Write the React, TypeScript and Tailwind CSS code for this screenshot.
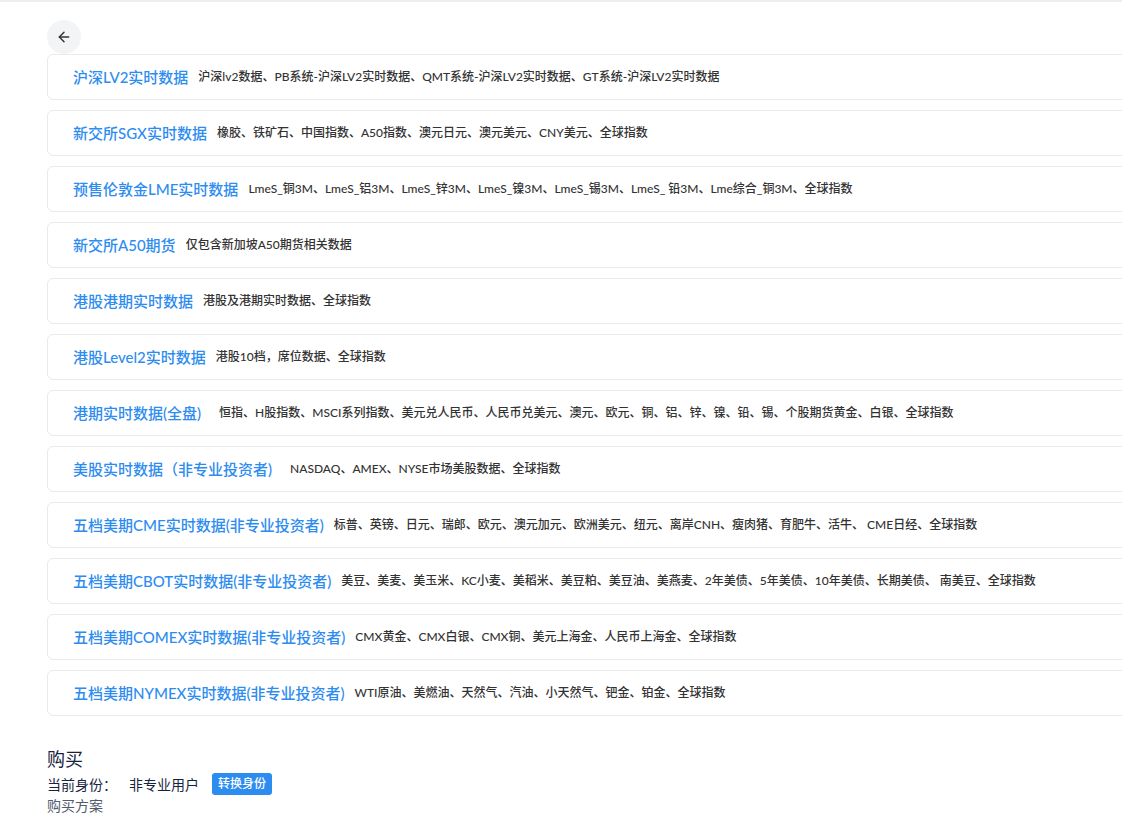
import { ArrowLeft } from "lucide-react";

const products = [
  { name: "沪深LV2实时数据", desc: "沪深lv2数据、PB系统-沪深LV2实时数据、QMT系统-沪深LV2实时数据、GT系统-沪深LV2实时数据" },
  { name: "新交所SGX实时数据", desc: "橡胶、铁矿石、中国指数、A50指数、澳元日元、澳元美元、CNY美元、全球指数" },
  { name: "预售伦敦金LME实时数据", desc: "LmeS_铜3M、LmeS_铝3M、LmeS_锌3M、LmeS_镍3M、LmeS_锡3M、LmeS_ 铅3M、Lme综合_铜3M、全球指数" },
  { name: "新交所A50期货", desc: "仅包含新加坡A50期货相关数据" },
  { name: "港股港期实时数据", desc: "港股及港期实时数据、全球指数" },
  { name: "港股Level2实时数据", desc: "港股10档，席位数据、全球指数" },
  { name: "港期实时数据(全盘)", desc: "恒指、H股指数、MSCI系列指数、美元兑人民币、人民币兑美元、澳元、欧元、铜、铝、锌、镍、铅、锡、个股期货黄金、白银、全球指数", pad: true },
  { name: "美股实时数据（非专业投资者)", desc: "NASDAQ、AMEX、NYSE市场美股数据、全球指数", pad: true },
  { name: "五档美期CME实时数据(非专业投资者)", desc: "标普、英镑、日元、瑞郎、欧元、澳元加元、欧洲美元、纽元、离岸CNH、瘦肉猪、育肥牛、活牛、 CME日经、全球指数" },
  { name: "五档美期CBOT实时数据(非专业投资者)", desc: "美豆、美麦、美玉米、KC小麦、美稻米、美豆粕、美豆油、美燕麦、2年美债、5年美债、10年美债、长期美债、 南美豆、全球指数" },
  { name: "五档美期COMEX实时数据(非专业投资者)", desc: "CMX黄金、CMX白银、CMX铜、美元上海金、人民币上海金、全球指数" },
  { name: "五档美期NYMEX实时数据(非专业投资者)", desc: "WTI原油、美燃油、天然气、汽油、小天然气、钯金、铂金、全球指数" },
];

export default function App() {
  return (
    <div className="min-h-[827px] overflow-hidden bg-white border-t-2 border-[#eceef0] font-['Lato','Noto_Sans_CJK_SC',sans-serif] text-[#333]">
      <div className="pl-[47px] pt-[18px]">
        <button className="flex h-[34px] w-[34px] items-center justify-center rounded-full bg-[#f3f4f5] text-[#333]">
          <ArrowLeft className="h-4 w-4" strokeWidth={2.2} />
        </button>

        <div className="-mr-4 flex flex-col gap-[10px]">
          {products.map((p) => (
            <div
              key={p.name}
              className="flex h-[46px] items-center rounded-md border border-[#e8eaec] bg-white pl-[25px]"
            >
              <span className="text-[15px] font-medium text-[#2d8cf0]">{p.name}</span>
              <span className={`${p.pad ? "ml-[18px]" : "ml-[10px]"} text-[12px] font-medium text-[#333]`}>
                {p.desc}
              </span>
            </div>
          ))}
        </div>

        <div className="mt-[30px]">
          <h2 className="text-[18px] leading-[26px] text-[#17233d]">购买</h2>
          <div className="flex h-[24px] items-center text-[14px] text-[#17233d]">
            <span className="w-[82px]">当前身份：</span>
            <span>非专业用户</span>
            <span className="ml-[13px] rounded-[3px] bg-[#2d8cf0] px-[6px] text-[12px] font-medium leading-[22px] text-white">
              转换身份
            </span>
          </div>
          <div className="text-[14px] leading-[20px] text-[#515a6e]">购买方案</div>
        </div>
      </div>
    </div>
  );
}
